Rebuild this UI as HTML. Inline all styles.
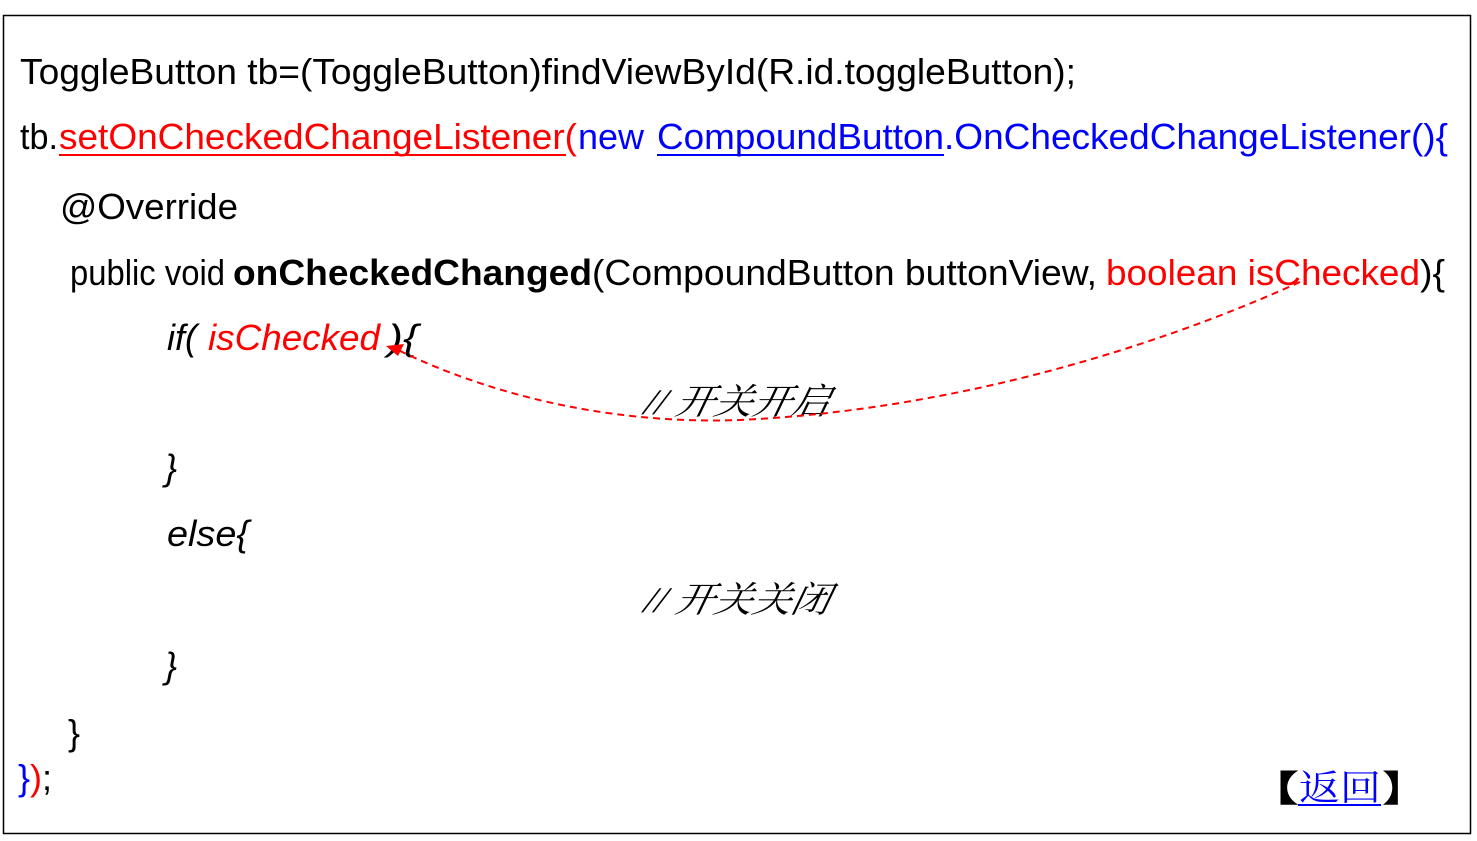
<!DOCTYPE html>
<html><head><meta charset="utf-8"><style>
html,body{margin:0;padding:0;background:#fff;width:1477px;height:841px;overflow:hidden}
svg{display:block}
text{font-family:"Liberation Sans","Noto Sans CJK SC",sans-serif;font-size:36px}
.cj{font-family:"Liberation Serif","Noto Serif CJK SC",serif}
.br{font-family:"Noto Sans CJK SC",sans-serif;font-weight:900}
</style></head><body>
<svg width="1477" height="841" viewBox="0 0 1477 841">
<rect x="3.5" y="15.5" width="1467" height="818" fill="#fff" stroke="#000" stroke-width="1.5"/>
<text x="20" y="84" textLength="1056" lengthAdjust="spacingAndGlyphs">ToggleButton tb=(ToggleButton)findViewById(R.id.toggleButton);</text>
<text x="20" y="149" textLength="38" lengthAdjust="spacingAndGlyphs">tb.</text>
<text x="59" y="149" fill="#f00" textLength="518" lengthAdjust="spacingAndGlyphs">setOnCheckedChangeListener(</text>
<line x1="59" y1="155" x2="566" y2="155" stroke="#f00" stroke-width="2"/>
<text x="578" y="149" fill="#00f" textLength="66" lengthAdjust="spacingAndGlyphs">new</text>
<text x="657" y="149" fill="#00f" textLength="287" lengthAdjust="spacingAndGlyphs">CompoundButton</text>
<line x1="657" y1="155" x2="944" y2="155" stroke="#00f" stroke-width="2"/>
<text x="944" y="149" fill="#00f" textLength="504" lengthAdjust="spacingAndGlyphs">.OnCheckedChangeListener(){</text>
<text x="60" y="219" textLength="178" lengthAdjust="spacingAndGlyphs">@Override</text>
<text x="70" y="285" font-size="31" textLength="155" lengthAdjust="spacingAndGlyphs">public void</text>
<text x="233" y="285" font-weight="bold" textLength="359" lengthAdjust="spacingAndGlyphs">onCheckedChanged</text>
<text x="592" y="285" textLength="505" lengthAdjust="spacingAndGlyphs">(CompoundButton buttonView,</text>
<text x="1106" y="285" fill="#f00" textLength="314" lengthAdjust="spacingAndGlyphs">boolean isChecked</text>
<text x="1420" y="285" textLength="25" lengthAdjust="spacingAndGlyphs">){</text>
<text x="167" y="350" font-style="italic" textLength="30" lengthAdjust="spacingAndGlyphs">if(</text>
<text x="208" y="350" font-style="italic" fill="#f00" textLength="172" lengthAdjust="spacingAndGlyphs">isChecked</text>
<text x="388" y="350" font-style="italic" textLength="30" lengthAdjust="spacingAndGlyphs">){</text>
<text x="643" y="414" class="cj" font-style="italic" textLength="185" lengthAdjust="spacingAndGlyphs" transform="skewX(-12) translate(88,0)">// 开关开启</text>
<text x="165" y="480" font-style="italic">}</text>
<text x="167" y="546" font-style="italic" textLength="82" lengthAdjust="spacingAndGlyphs">else{</text>
<text x="643" y="612" class="cj" font-style="italic" textLength="185" lengthAdjust="spacingAndGlyphs" transform="skewX(-12) translate(130,0)">// 开关关闭</text>
<text x="165" y="678" font-style="italic">}</text>
<text x="68" y="745">}</text>
<text x="18" y="790" fill="#00f">}</text>
<text x="30" y="790" fill="#f00">)</text>
<text x="42" y="790">;</text>
<g transform="translate(1297,0) scale(2.4,1) translate(-1297,0)"><text x="1275" y="801" class="br" textLength="23" lengthAdjust="spacingAndGlyphs">【</text></g>
<text x="1299" y="800" class="cj" fill="#00f" textLength="82" lengthAdjust="spacingAndGlyphs">返回</text>
<line x1="1298" y1="805" x2="1381" y2="805" stroke="#00f" stroke-width="2"/>
<g transform="translate(1382,0) scale(2.2,1) translate(-1382,0)"><text x="1382" y="801" class="br" textLength="21" lengthAdjust="spacingAndGlyphs">】</text></g>
<path d="M1300,282 C1150,350 950,410 740,420 C600,425 480,390 398,350" fill="none" stroke="#f00" stroke-width="2" stroke-dasharray="7,5"/>
<path d="M386,346 L404,344 L398,356 Z" fill="#f00"/>
</svg>
</body></html>
